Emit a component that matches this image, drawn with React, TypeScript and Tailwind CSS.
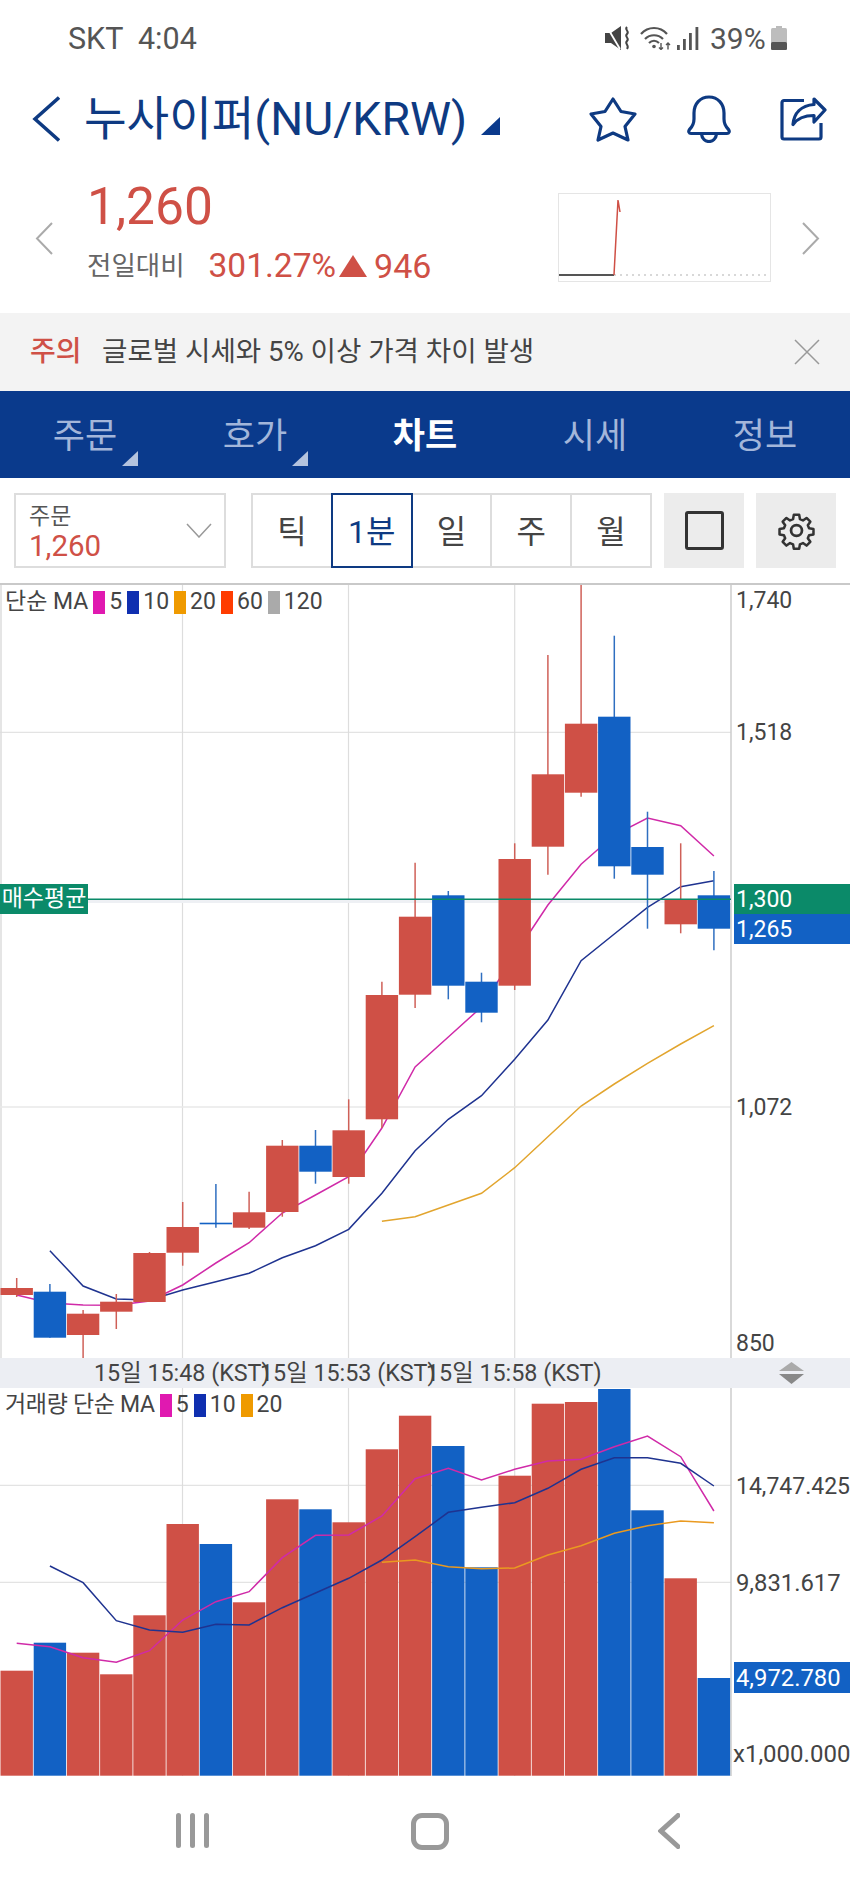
const RED = "#cf5046";
const BLUE = "#1261c4";
const NAVY = "#0b3a8c";
const STEP = 33.2;

const cx = (i: number) => 16.7 + STEP * i;

// [up, bodyTop, bodyBottom, wickTop, wickBottom]
const candles: [boolean, number, number, number, number][] = [
  [true, 1288, 1295, 1278, 1297],
  [false, 1291.7, 1337.7, 1284, 1337.7],
  [true, 1313.7, 1335, 1310, 1358],
  [true, 1301.7, 1311.7, 1294, 1329],
  [true, 1253, 1302, 1252, 1302],
  [true, 1227, 1252.7, 1202, 1265.7],
  [false, 1222.7, 1224.3, 1184, 1227.7],
  [true, 1212.3, 1227.7, 1191.7, 1229],
  [true, 1145.7, 1212, 1140, 1216.7],
  [false, 1145.7, 1171.7, 1130, 1183.7],
  [true, 1130.3, 1177, 1099.3, 1183.7],
  [true, 995, 1119.3, 981.7, 1128],
  [true, 916.7, 994.7, 862.7, 1008],
  [false, 895.3, 985.7, 891, 999.3],
  [false, 981.7, 1012.7, 972.7, 1022.3],
  [true, 859, 985.7, 843.3, 990],
  [true, 774.3, 846.7, 655, 874.7],
  [true, 723.7, 792.7, 584, 796.7],
  [false, 716.7, 866.3, 635.7, 878.7],
  [false, 847, 874.7, 811.7, 928.7],
  [true, 899.3, 924.3, 843.3, 933.3],
  [false, 895.3, 928.7, 871, 950.3],
];

const priceMa5 = [1295, 1303, 1305, 1305.3, 1301, 1285, 1263, 1242.7, 1213, 1195, 1176.7, 1128, 1067, 1037, 1007, 955, 905, 864.3, 835, 818, 825.7, 856];
const priceMa10 = [1250.7, 1286, 1299, 1300, 1290, 1281.7, 1273.3, 1257.7, 1245.7, 1229.3, 1193.3, 1150.7, 1119.3, 1095.7, 1059.3, 1020, 960.7, 934, 907.3, 886.7, 880.7];
const priceMa20 = [1221.3, 1216.7, 1205, 1193.3, 1167.7, 1136.7, 1106, 1084, 1063.3, 1044, 1025.7];

const volumes: [boolean, number][] = [
  [true, 1670.7], [false, 1642.7], [true, 1652.7], [true, 1674.3], [true, 1615.3], [true, 1524],
  [false, 1544], [true, 1602.3], [true, 1499.3], [false, 1509.3], [true, 1522.3], [true, 1449.3],
  [true, 1415.7], [false, 1446], [false, 1567.3], [true, 1475.7], [true, 1403.7], [true, 1402],
  [false, 1389], [false, 1510.3], [true, 1578.3], [false, 1678],
];

const volMa5 = [1643.3, 1646.7, 1657.7, 1662.3, 1650.7, 1620, 1601.7, 1591.7, 1557.7, 1535.3, 1535, 1516, 1478.7, 1468.3, 1480, 1469.3, 1461, 1459.3, 1446.7, 1436, 1456.7, 1511];
const volMa10 = [1566, 1582.7, 1620.7, 1630, 1632.3, 1624.3, 1625, 1607.7, 1593, 1578.3, 1560, 1536.7, 1512.3, 1507.3, 1502.7, 1488.3, 1469.3, 1457.7, 1457.7, 1463.3, 1486];
const volMa20 = [1562.3, 1560, 1566.7, 1568.7, 1568, 1555, 1545.7, 1533.3, 1525.7, 1521, 1522.7];

function MaLine({ ys, start, color }: { ys: number[]; start: number; color: string }) {
  const points = ys.map((y, i) => `${cx(start + i)},${y}`).join(" ");
  return <polyline points={points} fill="none" stroke={color} strokeWidth="1.5" />;
}

function Swatch({ className }: { className: string }) {
  return <span className={`ml-[5px] mr-[4px] h-[23px] w-[12px] ${className}`} />;
}

function Legend({ title, titleClass, items }: { title: string; titleClass?: string; items: [string, string][] }) {
  return (
    <div className="absolute left-[5px] flex items-center text-[23px] leading-[24px] text-[#444]">
      <span className={titleClass}>{title}</span>
      {items.map(([cls, label]) => (
        <span key={label} className="flex items-center">
          <Swatch className={cls} />
          <span>{label}</span>
        </span>
      ))}
    </div>
  );
}

function AxisLabel({ className, children }: { className: string; children: string }) {
  return (
    <div className={`absolute whitespace-nowrap leading-[30px] text-[#444] ${className}`}>
      {children}
    </div>
  );
}

function Chevron({ dir, className, color, width }: { dir: "left" | "right"; className: string; color: string; width: number }) {
  return (
    <svg viewBox="0 0 18 33" className={className} fill="none" stroke={color} strokeWidth={width}>
      <polyline points={dir === "left" ? "17,1 2,16.5 17,32" : "1,1 16,16.5 1,32"} />
    </svg>
  );
}

function StatusBar() {
  return (
    <div className="flex h-[78px] items-start justify-between pl-[68px] pr-[63px] pt-[21px] text-[#555]">
      <div className="whitespace-pre text-[30.5px] leading-[36px]">SKT  4:04</div>
      <div className="flex items-center">
        <svg viewBox="0 0 26 24" className="-mt-[2px] h-[24px] w-[26px]">
          <path d="M0 7h6l10-7v24L6 17H0z" fill="#444" />
          <path d="M2 1l13 22" stroke="#fff" strokeWidth="1.8" />
          <path d="M22 1c-3 3 3 4 0 7s3 4 0 7 3 4 0 8" fill="none" stroke="#444" strokeWidth="2" />
        </svg>
        <svg viewBox="0 0 32 24" className="-mt-[2px] ml-[9px] h-[24px] w-[32px]" fill="none" stroke="#555" strokeWidth="2.2">
          <path d="M1 8c7-8 19-8 26 0" />
          <path d="M5 13c5-5 13-5 18 0" />
          <path d="M9 17c3-3 7-3 10 0" />
          <circle cx="14" cy="20.500" r="1.800" fill="#555" stroke="none" />
          <path d="M21 17v6.500M19 21.500l2 2 2-2M28 23.500V17M26 19l2-2 2 2" strokeWidth="1.400" />
        </svg>
        <svg viewBox="0 0 22 24" className="-mt-[2px] ml-[5px] h-[24px] w-[22px]" fill="#555">
          <rect x="0" y="19" width="2.800" height="5" />
          <rect x="6" y="13" width="2.800" height="11" />
          <rect x="12" y="7" width="2.800" height="17" />
          <rect x="18.500" y="1" width="2.800" height="23" />
        </svg>
        <span className="ml-[11px] w-[56px] text-[30px] leading-[36px]">39%</span>
        <svg viewBox="0 0 16 24" className="-mt-[2px] ml-[5px] h-[24px] w-[16px]">
          <rect x="5" y="0" width="6" height="3" fill="#bbb" />
          <rect x="0" y="2" width="16" height="22" rx="1.5" fill="#bdbdbd" />
          <rect x="0" y="16" width="16" height="8" rx="1.5" fill="#555" />
        </svg>
      </div>
    </div>
  );
}

function TitleRow() {
  return (
    <div className="flex h-[82px] items-center pl-[32px] text-[#0e3a82]">
      <svg viewBox="0 0 28 46" className="h-[46px] w-[28px]" fill="none" stroke="#0e3a82" strokeWidth="3.5">
        <polyline points="27,1.5 3,23 27,44.5" />
      </svg>
      <div className="ml-[24px] w-[382px] whitespace-nowrap text-[46.3px] leading-[50px]">누사이퍼(NU/KRW)</div>
      <svg viewBox="0 0 19 18" className="ml-[15px] mt-[14px] h-[18px] w-[19px]" fill={NAVY}>
        <polygon points="19,0 19,18 0,18" />
      </svg>
      <svg viewBox="0 0 50 47" className="ml-[88px] h-[47px] w-[50px]" fill="none" stroke="#0e3a82" strokeWidth="3.2" strokeLinejoin="round">
        <polygon points="25,3 33,15.5 47,18 37,30.5 40,44 25,37 10,44 13,30.5 3,18 17,15.5" />
      </svg>
      <svg viewBox="0 0 44 48" className="ml-[49px] h-[48px] w-[44px]" fill="none" stroke="#0e3a82" strokeWidth="3.2" strokeLinejoin="round">
        <path d="M22 2C13 2 7 9 7 18v6c0 5-2 8-4.500 10.500-1.500 2-.5 4 1.500 4h36c2 0 3-2 1.500-4C39 32 37 29 37 24v-6C37 9 31 2 22 2z" />
        <path d="M14.500 39c1 10 14 10 15 0" />
      </svg>
      <svg viewBox="0 0 47 44" className="ml-[49px] h-[44px] w-[47px]" fill="none" stroke="#0e3a82" strokeWidth="3.2" strokeLinejoin="round">
        <path d="M24 3.500H4a2 2 0 0 0-2 2V40a2 2 0 0 0 2 2h35a2 2 0 0 0 2-2V26" />
        <path d="M34 2l11 11-11 12v-6.500c-9 0-16 2-21 9 1-11 8-19 21-20z" />
      </svg>
    </div>
  );
}

function PriceRow() {
  return (
    <div className="flex h-[153px] items-start pl-[35px] pr-[30px]">
      <Chevron dir="left" color="#aaa" width={2} className="mt-[62px] h-[33px] w-[18px]" />
      <div className="ml-[34px] mt-[22px]">
        <div className="text-[51.5px] leading-[50px] text-[#cf5046]">1,260</div>
        <div className="mt-[16px] flex h-[36px] items-center">
          <span className="text-[26.5px] text-[#666]">전일대비</span>
          <span className="ml-[24px] text-[33.5px] leading-[36px] text-[#cf5046]">301.27%</span>
          <svg viewBox="0 0 28 22" className="ml-[3px] h-[22px] w-[28px]" fill="#cf5046">
            <polygon points="14,0 28,22 0,22" />
          </svg>
          <span className="ml-[7px] text-[34px] leading-[36px] text-[#cf5046]">946</span>
        </div>
      </div>
      <div className="ml-auto mt-[33px] h-[89px] w-[213px] border border-[#e5e5e5]">
        <svg viewBox="0 0 211 87" className="h-[87px] w-[211px]" fill="none">
          <line x1="55" y1="81" x2="208" y2="81" stroke="#ccc" strokeWidth="1.5" strokeDasharray="2 4" />
          <line x1="0" y1="81" x2="55" y2="81" stroke="#555" strokeWidth="2" />
          <polyline points="55,81 59,6 61,18" stroke="#cf5046" strokeWidth="1.5" />
        </svg>
      </div>
      <Chevron dir="right" color="#aaa" width={2} className="ml-[31px] mt-[62px] h-[33px] w-[18px]" />
    </div>
  );
}

function WarningBar() {
  return (
    <div className="flex h-[78px] items-center bg-[#f3f3f3] pl-[30px] pr-[30px]">
      <span className="w-[72px] text-[28px] font-medium text-[#cf5046]">주의</span>
      <span className="whitespace-nowrap text-[27.6px] text-[#444]">글로벌 시세와 5% 이상 가격 차이 발생</span>
      <svg viewBox="0 0 26 26" className="ml-auto h-[26px] w-[26px]" fill="none" stroke="#999" strokeWidth="1.5">
        <path d="M1 1l24 24M25 1L1 25" />
      </svg>
    </div>
  );
}

function TabBar() {
  const tabs = ["주문", "호가", "차트", "시세", "정보"];
  return (
    <div className="flex h-[87px] bg-[#0a3a8c]">
      {tabs.map((tab, i) => (
        <div key={tab} className="relative flex w-[170px] items-center justify-center pt-[6px]">
          <span className={`text-[35px] ${i === 2 ? "font-bold text-white" : "text-[#a3b6da]"}`}>{tab}</span>
          {i < 2 && (
            <svg viewBox="0 0 16 15" className="absolute bottom-[12px] right-[32px] h-[15px] w-[16px]" fill="#b4c3de">
              <polygon points="16,0 16,15 0,15" />
            </svg>
          )}
        </div>
      ))}
    </div>
  );
}

function Toolbar() {
  const periods = ["틱", "1분", "일", "주", "월"];
  return (
    <div className="flex h-[105px] items-start pl-[14px] pt-[15px]">
      <div className="relative h-[75px] w-[212px] border-2 border-[#ddd] pl-[13px] pt-[9px]">
        <div className="text-[23px] leading-[26px] text-[#555]">주문</div>
        <div className="text-[29.5px] leading-[32px] text-[#cf5046]">1,260</div>
        <svg viewBox="0 0 26 15" className="absolute right-[12px] top-[28px] h-[15px] w-[26px]" fill="none" stroke="#999" strokeWidth="1.5">
          <polyline points="1,1 13,14 25,1" />
        </svg>
      </div>
      <div className="ml-[25px] flex h-[75px] w-[401px] border-2 border-[#ddd]">
        {periods.map((p, i) => (
          <div
            key={p}
            className={`flex flex-1 items-center justify-center pt-[2px] text-[32px] ${
              i === 1
                ? "-my-[2px] border-2 border-[#0e3a82] text-[#0e3a82]"
                : `text-[#444] ${i === 0 || i === 2 ? "" : "border-l-2 border-[#ddd]"}`
            }`}
          >
            {p}
          </div>
        ))}
      </div>
      <div className="ml-[12px] flex h-[75px] w-[80px] items-center justify-center bg-[#ececec]">
        <div className="h-[39px] w-[39px] rounded-[3px] border-[3px] border-[#333]" />
      </div>
      <div className="ml-[12px] flex h-[75px] w-[80px] items-center justify-center bg-[#ececec]">
        <svg viewBox="0 0 24 24" className="h-[41px] w-[41px]" fill="none" stroke="#333" strokeWidth="1.6" strokeLinejoin="round">
          <path d="M10.3 2h3.400l.5 2.800 1.900.8 2.300-1.600 2.400 2.400-1.600 2.300.8 1.900 2.800.5v3.400l-2.800.5-.8 1.900 1.600 2.300-2.400 2.400-2.300-1.600-1.900.8-.5 2.800h-3.400l-.5-2.800-1.900-.8-2.300 1.600-2.400-2.400 1.600-2.300-.8-1.900-2.800-.5v-3.400l2.800-.5.8-1.900-1.600-2.300 2.400-2.400 2.300 1.600 1.900-.8z" transform="translate(12 12) scale(.92) translate(-12 -12)" />
          <circle cx="12" cy="12" r="3.200" />
        </svg>
      </div>
    </div>
  );
}

function PriceChart() {
  return (
    <div className="flex h-[775px] border-t-2 border-[#c9c9c9]">
      <div className="relative h-[773px] w-[732px] shrink-0">
        <svg viewBox="0 585 732 773" className="h-[773px] w-[732px]">
          <line x1="1" y1="585" x2="1" y2="1358" stroke="#ddd" strokeWidth="1.500" />
          {[182.5, 348.5, 514.7].map((x) => (
            <line key={x} x1={x} y1="585" x2={x} y2="1358" stroke="#ddd" strokeWidth="1.200" />
          ))}
          <line x1="0" y1="732.300" x2="731" y2="732.300" stroke="#ddd" />
          <line x1="0" y1="1107" x2="731" y2="1107" stroke="#e8e8e8" strokeWidth="1.500" />
          <line x1="731" y1="585" x2="731" y2="1358" stroke="#ccc" strokeWidth="1.500" />
          <rect x="0" y="900" width="731" height="3" fill="#eef0f4" />
          <MaLine ys={priceMa5} start={0} color="#d02aa8" />
          <MaLine ys={priceMa10} start={1} color="#1f3390" />
          <MaLine ys={priceMa20} start={11} color="#e2a52e" />
          {candles.map(([up, top, bottom, wickTop, wickBottom], i) => {
            const c = cx(i);
            const left = Math.max(0, c - 16.2);
            return (
              <g key={i}>
                <line x1={c} y1={wickTop} x2={c} y2={wickBottom} stroke={up ? "#cf6058" : "#2f6fc0"} strokeWidth="1.500" />
                <rect x={left} y={top} width={c + 16.2 - left} height={bottom - top} fill={up ? RED : BLUE} />
              </g>
            );
          })}
          <line x1="88" y1="899.300" x2="731" y2="899.300" stroke="#0b8a69" strokeWidth="1.500" />
        </svg>
        <div className="absolute top-[5px] left-0 right-0">
          <Legend
            title="단순 MA"
            items={[
              ["bg-[#e019b0]", "5"],
              ["bg-[#0f2fb0]", "10"],
              ["bg-[#ef9a00]", "20"],
              ["bg-[#ff3c00]", "60"],
              ["bg-[#aaaaaa]", "120"],
            ]}
          />
        </div>
        <div className="absolute left-0 top-[299px] flex h-[30px] w-[88px] items-center justify-center bg-[#0b8a69] text-[23px] text-white">
          매수평균
        </div>
      </div>
      <div className="relative flex-1">
        <AxisLabel className="left-[4px] top-[1px] text-[23px]">1,740</AxisLabel>
        <AxisLabel className="left-[4px] top-[133px] text-[23px]">1,518</AxisLabel>
        <AxisLabel className="left-[4px] top-[508px] text-[23px]">1,072</AxisLabel>
        <AxisLabel className="left-[4px] top-[744px] text-[23px]">850</AxisLabel>
        <div className="absolute left-[2px] right-0 top-[299px] h-[30px] bg-[#0b8a69] pl-[2px] pt-[1px] text-[23px] leading-[30px] text-white">1,300</div>
        <div className="absolute left-[2px] right-0 top-[329px] h-[30px] bg-[#1261c4] pl-[2px] pt-[1px] text-[23px] leading-[30px] text-white">1,265</div>
      </div>
    </div>
  );
}

function TimeBar() {
  return (
    <div className="relative flex h-[30px] items-center bg-[#eceef3] pl-[94px] text-[23.3px] text-[#444]">
      <span className="w-[166px] whitespace-nowrap">15일 15:48 (KST)</span>
      <span className="w-[166px] whitespace-nowrap">15일 15:53 (KST)</span>
      <span className="w-[166px] whitespace-nowrap">15일 15:58 (KST)</span>
      <svg viewBox="0 0 25 22" className="absolute left-[779px] top-[4px] h-[22px] w-[25px]">
        <polygon points="12.5,0 25,9 0,9" fill="#aaa" />
        <polygon points="0,12 25,12 12.5,22" fill="#888" />
      </svg>
    </div>
  );
}

function VolumeChart() {
  return (
    <div className="flex h-[388px]">
      <div className="relative h-[388px] w-[732px] shrink-0">
        <svg viewBox="0 1388 732 388" className="h-[388px] w-[732px]">
          {[182.5, 348.5, 514.7].map((x) => (
            <line key={x} x1={x} y1="1388" x2={x} y2="1776" stroke="#ddd" strokeWidth="1.200" />
          ))}
          <line x1="0" y1="1485.300" x2="731" y2="1485.300" stroke="#ddd" />
          <line x1="0" y1="1582.300" x2="731" y2="1582.300" stroke="#ddd" />
          <line x1="731" y1="1388" x2="731" y2="1776" stroke="#ccc" strokeWidth="1.500" />
          {volumes.map(([up, top], i) => {
            const c = cx(i);
            const left = Math.max(0, c - 16.2);
            return <rect key={i} x={left} y={top} width={c + 16.2 - left} height={1775.7 - top} fill={up ? RED : BLUE} />;
          })}
          <MaLine ys={volMa5} start={0} color="#d02aa8" />
          <MaLine ys={volMa10} start={1} color="#1f3390" />
          <MaLine ys={volMa20} start={11} color="#ea9a20" />
        </svg>
        <div className="absolute top-[5px] left-0 right-0">
          <Legend
            title="거래량 단순 MA"
            titleClass="tracking-[-0.3px]"
            items={[
              ["bg-[#e019b0]", "5"],
              ["bg-[#0f2fb0]", "10"],
              ["bg-[#ef9a00]", "20"],
            ]}
          />
        </div>
      </div>
      <div className="relative flex-1">
        <AxisLabel className="left-[4px] top-[84px] text-[23px]">14,747.425</AxisLabel>
        <AxisLabel className="left-[4px] top-[180px] text-[23.8px]">9,831.617</AxisLabel>
        <div className="absolute left-[2px] right-0 top-[274px] h-[31px] bg-[#1261c4] pl-[2px] pt-[1px] text-[23.8px] leading-[31px] text-white">4,972.780</div>
        <AxisLabel className="left-[1px] top-[351px] text-[24px]">x1,000.000</AxisLabel>
      </div>
    </div>
  );
}

function NavBar() {
  return (
    <div className="flex h-[113px] items-start pt-[37px]">
      <div className="ml-[176px] flex h-[36px] w-[33px] justify-between">
        <span className="h-[35px] w-[5px] rounded-full bg-[#999]" />
        <span className="h-[35px] w-[5px] rounded-full bg-[#999]" />
        <span className="h-[35px] w-[5px] rounded-full bg-[#999]" />
      </div>
      <div className="ml-[202px] h-[37px] w-[38px] rounded-[11px] border-[5px] border-[#999]" />
      <svg viewBox="0 0 22 36" className="ml-[209px] h-[36px] w-[22px]" fill="none" stroke="#999" strokeWidth="5" strokeLinecap="round">
        <polyline points="20,2.500 3,18 20,33.500" />
      </svg>
    </div>
  );
}

export default function App() {
  return (
    <div className="h-[1889px] w-[850px] overflow-hidden bg-white font-[family-name:Roboto,'Noto_Sans_CJK_KR',sans-serif]">
      <StatusBar />
      <TitleRow />
      <PriceRow />
      <WarningBar />
      <TabBar />
      <Toolbar />
      <PriceChart />
      <TimeBar />
      <VolumeChart />
      <NavBar />
    </div>
  );
}
